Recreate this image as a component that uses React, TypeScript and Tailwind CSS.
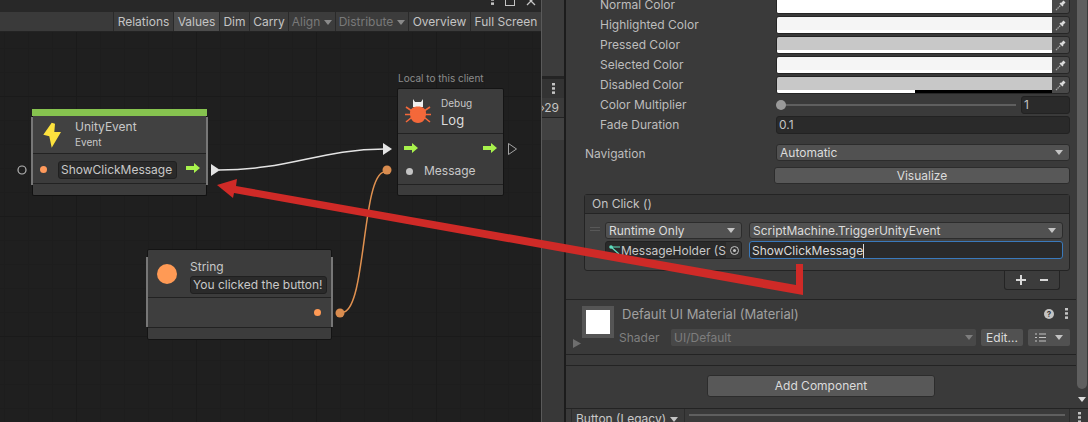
const GRID =
	"bg-[#1f1f1f] bg-[linear-gradient(#1a1a1a_1px,transparent_1px),linear-gradient(90deg,#1a1a1a_1px,transparent_1px),linear-gradient(#1d1d1d_1px,transparent_1px),linear-gradient(90deg,#1d1d1d_1px,transparent_1px)] bg-[size:120px_120px,120px_120px,24px_24px,24px_24px] bg-[position:76px_64px,76px_64px,4px_16px,4px_16px]";

const tools = [
	{ label: "Relations", w: "w-[60px]" },
	{ label: "Values", w: "w-[46px]", active: true },
	{ label: "Dim", w: "w-[30px]" },
	{ label: "Carry", w: "w-[39px]" },
	{ label: "Align", w: "w-[47px]", off: true, caret: true },
	{ label: "Distribute", w: "w-[73px]", off: true, caret: true },
	{ label: "Overview", w: "w-[62px]" },
	{ label: "Full Screen", w: "w-[71px]" },
];

function Caret({ className = "fill-[#c4c4c4]" }: { className?: string }) {
	return (
		<svg width="8" height="5" viewBox="0 0 8 5" className={className}>
			<path d="M0 0h8L4 5z" />
		</svg>
	);
}

function FlowArrow() {
	return (
		<svg width="14" height="10" viewBox="0 0 14 10" className="fill-[#a8f24c]">
			<path d="M0 3h8V0l6 5-6 5V7H0z" />
		</svg>
	);
}

function Dots() {
	return (
		<svg width="3" height="11" viewBox="0 0 3 11" className="fill-[#c4c4c4]">
			<rect y="0" width="3" height="2.5" />
			<rect y="4.2" width="3" height="2.5" />
			<rect y="8.4" width="3" height="2.5" />
		</svg>
	);
}

function Pipette() {
	return (
		<svg width="11" height="11" viewBox="0 0 11 11" fill="none">
			<path d="M1 10 6 5" stroke="#a8a8a8" strokeWidth="1.3" strokeDasharray="1.5 0.7" />
			<path d="M4.500 3.500l3 3L8.500 5.500 8 5l2.500-2.500L8.500.5 6 3l-.5-.5z" fill="#dcdcdc" />
		</svg>
	);
}

function ColorRow({
	label,
	color,
	stripe,
}: {
	label: string;
	color: string;
	stripe: React.ReactNode;
}) {
	return (
		<div className="flex items-center h-[18px]">
			<span className="w-[210px] pl-[34px] text-[#bdbdbd]">{label}</span>
			<div className="flex-1 flex h-[18px] rounded-[3px] border border-[#262626] bg-[#4a4a4a] overflow-hidden">
				<div className={`flex-1 flex flex-col ${color}`}>
					<div className="flex-1" />
					{stripe}
				</div>
				<div className="w-[17px] flex items-center justify-center">
					<Pipette />
				</div>
			</div>
		</div>
	);
}

function Dropdown({
	text,
	className,
}: {
	text: string;
	className: string;
}) {
	return (
		<div
			className={`flex items-center justify-between h-[17px] px-[3px] rounded-[3px] border border-[#2c2c2c] bg-[#515151] text-[#dcdcdc] ${className}`}
		>
			<span>{text}</span>
			<span className="pr-[3px]">
				<Caret />
			</span>
		</div>
	);
}

function NodeInput({ text, className }: { text: string; className: string }) {
	return (
		<div
			className={`h-[18px] flex items-center pl-[2px] rounded-[3px] border border-[#202020] bg-[#2a2a2a] text-[#c8c8c8] whitespace-nowrap overflow-hidden ${className}`}
		>
			{text}
		</div>
	);
}

function GraphNodes() {
	return (
		<>
			{/* UnityEvent */}
			<div className="absolute left-[32px] top-[77px] w-[175px] h-[87px] flex flex-col rounded-[2px] bg-[#3c3c3c] border-x border-b border-[#111] text-[#c8c8c8]">
				<div className="h-[7px] bg-[#86c34f] -mx-px" />
				<div className="h-[38px] flex items-center bg-[#414141] border-b border-[#222] pl-[10px] gap-[13px]">
					<svg width="19" height="26" viewBox="0 0 19 26" className="fill-[#fde23e]">
						<path d="M8.700.7.300 12.700l6 1.600 2.400 11.400L18 10h-6.700L12 1.700z" />
					</svg>
					<div className="flex flex-col -mt-[1px]">
						<span className="leading-[16px]">UnityEvent</span>
						<span className="text-[10px] leading-[14px]">Event</span>
					</div>
				</div>
				<div className="h-[30px] flex items-center border-b border-[#222] bg-[#3c3c3c] pl-[7px] pt-[2px]">
					<span className="w-[7px] h-[7px] rounded-full bg-[#ff9a5c]" />
					<NodeInput text="ShowClickMessage" className="ml-[11px] w-[119px]" />
					<span className="ml-[9px] -mt-[3px]">
						<FlowArrow />
					</span>
				</div>
			</div>
			<div className="absolute left-[31px] top-[85px] w-[2px] h-[68px] bg-[#777]" />
			<div className="absolute left-[206px] top-[85px] w-[2px] h-[68px] bg-[#777]" />

			{/* Debug.Log */}
			<span className="absolute left-[398px] top-[40px] text-[10px] leading-[13px] text-[#8c8c8c]">
				Local to this client
			</span>
			<div className="absolute left-[397px] top-[56px] w-[107px] h-[108px] flex flex-col rounded-[2px] bg-[#3c3c3c] border border-[#141414] text-[#c8c8c8]">
				<div className="h-[45px] flex items-center border-b border-[#222] pl-[7px] gap-[10px]">
					<svg width="26" height="24" viewBox="0 0 26 24" fill="none">
						<path d="M8 0l2 3h6l2-3v8H8z" fill="#f0f0f0" />
						<path d="M5 14c0-4 3-6.500 8-6.500s8 2.500 8 6.500c0 6-3 10-8 10s-8-4-8-10z" fill="#f4683a" />
						<path d="M1 8l5 3.500h14l5-3.500M0 15.500h26M1 23l5-4h14l5 4" stroke="#f4683a" strokeWidth="1.600" />
					</svg>
					<div className="flex flex-col pt-[4px]">
						<span className="text-[10px] leading-[14px]">Debug</span>
						<span className="text-[13px] leading-[20px] text-[#dcdcdc]">Log</span>
					</div>
				</div>
				<div className="h-[51px] flex flex-col border-b border-[#222]">
					<div className="flex justify-between px-[6px] pt-[9px] h-[26px]">
						<FlowArrow />
						<FlowArrow />
					</div>
					<div className="flex items-center pl-[8px] gap-[11px] mt-[3px]">
						<span className="w-[7px] h-[7px] rounded-full bg-[#c4c4c4]" />
						<span>Message</span>
					</div>
				</div>
			</div>

			{/* String literal */}
			<div className="absolute left-[147px] top-[217px] w-[185px] h-[91px] flex flex-col rounded-[2px] bg-[#3c3c3c] border border-[#141414] text-[#c8c8c8]">
				<div className="h-[48px] flex items-center border-b border-[#222] pl-[9px] gap-[13px]">
					<span className="w-[20px] h-[20px] rounded-full bg-[#ff9a55]" />
					<div className="flex flex-col pt-[5px]">
						<span className="leading-[17px]">String</span>
						<NodeInput text="You clicked the button!" className="w-[137px] mt-[1px]" />
					</div>
				</div>
				<div className="h-[30px] flex items-center justify-end border-b border-[#222] bg-[#3e3e3e] pr-[10px]">
					<span className="w-[7px] h-[7px] rounded-full bg-[#ff9a55]" />
				</div>
			</div>
			<div className="absolute left-[146px] top-[225px] w-[2px] h-[70px] bg-[#777]" />
			<div className="absolute left-[331px] top-[225px] w-[2px] h-[70px] bg-[#777]" />

			{/* connections */}
			<svg width="541" height="390" viewBox="0 32 541 390" fill="none" className="absolute left-0 top-0">
				<circle cx="22" cy="170" r="4" stroke="#b4b4b4" strokeWidth="1.200" />
				<path d="M219 170C290 170 320 149 385 149" stroke="#e4e4e4" strokeWidth="1.500" />
				<path d="M211 164v12l9-6z" fill="#e4e4e4" />
				<path d="M383 143v12l9-6z" fill="#e4e4e4" />
				<path d="M508.500 143.500v11l8-5.500z" stroke="#a4a4a4" />
				<path d="M344 312C366 306 362 176 384 172" stroke="#e09150" strokeWidth="1.500" />
				<circle cx="340" cy="313" r="4.500" fill="#d98c4f" />
				<circle cx="387" cy="170" r="4.500" fill="#d98c4f" />
			</svg>
		</>
	);
}

function GraphWindow() {
	return (
		<div className="w-[541px] h-full flex flex-col">
			<div className="h-[12px] bg-[#282828] flex items-start justify-end gap-[11px] pr-[5px] overflow-hidden">
				<div className="-mt-[6px]">
					<Dots />
				</div>
				<div className="w-[10px] h-[6px] border-x border-b border-[#c4c4c4]" />
				<svg width="10" height="6" viewBox="0 0 10 6" fill="none" stroke="#c4c4c4" strokeWidth="1.300">
					<path d="M1 -3 9 5M9 -3 1 5" />
				</svg>
			</div>
			<div className="h-[20px] flex justify-end bg-[#3a3a3a] border-b border-[#232323]">
				{tools.map((t) => (
					<div
						key={t.label}
						className={`${t.w} flex items-center justify-center gap-[4px] pt-[1px] border-l border-[#2a2a2a] whitespace-nowrap ${t.active ? "bg-[#4c4c4c]" : "bg-[#3c3c3c]"} ${t.off ? "text-[#797979]" : "text-[#c4c4c4]"}`}
					>
						{t.label}
						{t.caret && <Caret className="fill-[#8a8a8a]" />}
					</div>
				))}
			</div>
			<div className={`relative flex-1 overflow-hidden ${GRID}`}>
				<GraphNodes />
			</div>
		</div>
	);
}

function MiddleStrip() {
	return (
		<div className="w-[25px] h-full flex flex-col border-l border-[#5a5a5a] border-r-2 border-r-[#1c1c1c] text-[#c4c4c4]">
			<div className="h-[76px] bg-[#3c3c3c]" />
			<div className="h-[3px] bg-[#242424]" />
			<div className="h-[19px] flex items-center justify-center bg-[#333]">
				<Dots />
			</div>
			<div className="h-[20px] flex items-center justify-end pr-[5px] bg-[#3a3a3a] border-b border-[#232323] overflow-hidden whitespace-nowrap">
				›29
			</div>
			<div className="h-[22px] bg-[#414141]" />
			<div className="flex-1 bg-[#383838]" />
		</div>
	);
}

function Inspector() {
	return (
		<div className="flex-1 h-full flex flex-col bg-[#3a3a3a] overflow-hidden">
			<div className="flex-1 flex min-h-0">
				<div className="w-[510px] flex flex-col">
					<div className="pr-[6px] flex flex-col gap-[2px] -mt-[4px]">
						<ColorRow label="Normal Color" color="bg-white" stripe={<div className="h-[3px] bg-white" />} />
						<ColorRow label="Highlighted Color" color="bg-[#f5f5f5]" stripe={<div className="h-[3px] bg-white" />} />
						<ColorRow label="Pressed Color" color="bg-[#c8c8c8]" stripe={<div className="h-[3px] bg-white" />} />
						<ColorRow label="Selected Color" color="bg-[#f5f5f5]" stripe={<div className="h-[3px] bg-white" />} />
						<ColorRow
							label="Disabled Color"
							color="bg-[#c8c8c8]"
							stripe={
								<div className="h-[3px] flex">
									<div className="flex-1 bg-white" />
									<div className="flex-1 bg-black" />
								</div>
							}
						/>
						<div className="flex items-center h-[18px]">
							<span className="w-[210px] pl-[34px] text-[#bdbdbd]">Color Multiplier</span>
							<div className="relative w-[240px] h-[2px] bg-[#5f5f5f]">
								<div className="absolute left-0 -top-[4px] w-[10px] h-[10px] rounded-full bg-[#999]" />
							</div>
							<div className="ml-[5px] flex-1 h-[18px] flex items-center pl-[2px] rounded-[3px] border border-[#222] bg-[#2a2a2a] text-[#c4c4c4]">
								1
							</div>
						</div>
						<div className="flex items-center h-[18px]">
							<span className="w-[210px] pl-[34px] text-[#bdbdbd]">Fade Duration</span>
							<div className="flex-1 h-[18px] flex items-center pl-[2px] rounded-[3px] border border-[#222] bg-[#2a2a2a] text-[#c4c4c4]">
								0.1
							</div>
						</div>
					</div>

					<div className="mt-[10px] pr-[6px] flex items-start h-[18px]">
						<span className="w-[210px] pl-[19px] pt-[2px] text-[#bdbdbd]">Navigation</span>
						<Dropdown text="Automatic" className="flex-1" />
					</div>
					<div className="mt-[5px] ml-[208px] mr-[6px] h-[17px] flex items-center justify-center rounded-[3px] border border-[#2c2c2c] bg-[#585858] text-[#dcdcdc]">
						Visualize
					</div>

					{/* On Click list */}
					<div className="mt-[10px] ml-[18px] mr-[6px] h-[77px] flex flex-col rounded-[3px] border border-[#242424] bg-[#414141]">
						<div className="h-[19px] flex items-center pl-[7px] bg-[#353535] border-b border-[#242424] text-[#c4c4c4]">
							On Click ()
						</div>
						<div className="flex pt-[8px] pl-[5px] pr-[6px]">
							<div className="w-[10px] h-[4px] mt-[5px] mr-[5px] border-y border-[#585858]" />
							<div className="flex-1 flex flex-col gap-[2px]">
								<div className="flex gap-[7px]">
									<Dropdown text="Runtime Only" className="w-[137px]" />
									<Dropdown text="ScriptMachine.TriggerUnityEvent" className="flex-1" />
								</div>
								<div className="flex gap-[7px]">
									<div className="w-[137px] h-[18px] flex items-center rounded-[3px] border border-[#222] bg-[#2a2a2a] text-[#c8c8c8] overflow-hidden">
										<svg width="12" height="10" viewBox="0 0 12 10" fill="none" className="shrink-0 ml-[3px]">
											<circle cx="2" cy="2" r="1.800" fill="#5fe0c0" />
											<path d="M2 2l9 0M2 2l8 7" stroke="#5fe0c0" strokeWidth="1.200" />
										</svg>
										<span className="flex-1 pt-[1px] whitespace-nowrap">MessageHolder (S</span>
										<div className="w-[17px] h-full shrink-0 flex items-center justify-center bg-[#333]">
											<span className="w-[9px] h-[9px] rounded-full border border-[#c4c4c4] flex items-center justify-center">
												<span className="w-[3px] h-[3px] rounded-full bg-[#c4c4c4]" />
											</span>
										</div>
									</div>
									<div className="flex-1 h-[18px] flex items-center pl-[2px] pt-[1px] rounded-[3px] border border-[#3a79bb] bg-[#2a2a2a] text-[#dcdcdc]">
										ShowClickMessage
										<span className="w-px h-[14px] bg-[#dcdcdc]" />
									</div>
								</div>
							</div>
						</div>
					</div>
					<div className="self-end mr-[16px] w-[56px] h-[19px] flex items-center justify-center gap-[14px] rounded-b-[3px] border-x border-b border-[#242424] bg-[#3c3c3c]">
						<svg width="10" height="10" viewBox="0 0 10 10" className="fill-[#d8d8d8]">
							<path d="M4 0h2v4h4v2H6v4H4V6H0V4h4z" />
						</svg>
						<div className="w-[8px] h-[2px] bg-[#d8d8d8]" />
					</div>

					{/* Material */}
					<div className="mt-[9px] h-[56px] relative flex border-y border-[#232323] pt-[6px] pl-[16px]">
						<div className="w-[32px] h-[32px] shrink-0 bg-[#555] flex items-center justify-center">
							<div className="w-[24px] h-[24px] bg-white" />
						</div>
						<div className="flex-1 flex flex-col pr-[6px]">
							<div className="h-[15px] flex items-center justify-between pl-[8px] text-[#a0a0a0]">
								<span className="text-[13px]">Default UI Material (Material)</span>
								<div className="flex items-center gap-[11px] pr-[2px]">
									<span className="w-[10px] h-[10px] rounded-full bg-[#c4c4c4] text-[#3a3a3a] text-[8px] font-bold leading-[10px] text-center">
										?
									</span>
									<Dots />
								</div>
							</div>
							<div className="mt-[8px] ml-[5px] flex items-center gap-[5px]">
								<span className="w-[47px] text-[#808080] mt-[1px]">Shader</span>
								<div className="w-[305px] h-[17px] flex items-center justify-between pl-[3px] pr-[3px] rounded-[2px] bg-[#484848] text-[#7d7d7d]">
									UI/Default
									<Caret className="fill-[#7d7d7d]" />
								</div>
								<div className="w-[42px] h-[17px] flex items-center justify-center rounded-[2px] bg-[#515151] text-[#dcdcdc]">
									Edit...
								</div>
								<div className="w-[42px] h-[17px] flex items-center justify-center gap-[9px] rounded-[2px] bg-[#515151]">
									<svg width="11" height="9" viewBox="0 0 11 9" fill="none" stroke="#c4c4c4">
										<path d="M0 1h2M0 4.500h2M0 8h2M4 1h7M4 4.500h7M4 8h7" />
									</svg>
									<Caret />
								</div>
							</div>
						</div>
						<svg width="8" height="9" viewBox="0 0 8 9" className="absolute left-[7px] top-[39px] fill-[#6e6e6e]">
							<path d="M0 0v9l8-4.500z" />
						</svg>
					</div>
					<div className="mt-[10px] border-t border-[#232323] flex-1 flex justify-center pt-[9px]">
						<div className="w-[228px] h-[22px] flex items-center justify-center rounded-[3px] border border-[#2c2c2c] bg-[#585858] text-[#dcdcdc]">
							Add Component
						</div>
					</div>
				</div>
				<div className="flex-1 relative">
					<div className="absolute left-[1px] top-0 w-[10px] h-[389px] rounded-b-[5px] bg-[#5f5f5f]" />
					<span className="absolute left-[2px] top-[397px]">
						<Caret className="fill-[#dcdcdc]" />
					</span>
				</div>
			</div>
			<div className="h-[14px] shrink-0 flex items-stretch border-t border-[#232323] pl-[5px] overflow-hidden">
				<div className="w-[114px] shrink-0 flex items-center gap-[4px] pl-[4px] border-x border-[#2c2c2c] text-[#c8c8c8] whitespace-nowrap h-[20px]">
					Button (Legacy)
					<Caret />
				</div>
				<div className="flex-1 mx-[4px] mt-[5px] h-[2px] bg-[#5f5f5f]" />
				<div className="w-[19px] flex justify-center pt-[3px] border-l border-[#2c2c2c]">
					<Dots />
				</div>
			</div>
		</div>
	);
}

export default function App() {
	return (
		<div className="relative w-[1088px] h-[422px] flex overflow-hidden bg-[#1f1f1f] font-['Inter','Noto_Sans',sans-serif] text-[12px] leading-[16px]">
			<GraphWindow />
			<MiddleStrip />
			<Inspector />
			{/* red annotation arrow drawn over the screenshot */}
			<svg width="1088" height="422" viewBox="0 0 1088 422" className="absolute left-0 top-0 pointer-events-none">
				<path d="M217 185 237 179 236 186 796 285V264H803V295L234 193 233 198z" fill="#cf2a27" />
			</svg>
		</div>
	);
}
